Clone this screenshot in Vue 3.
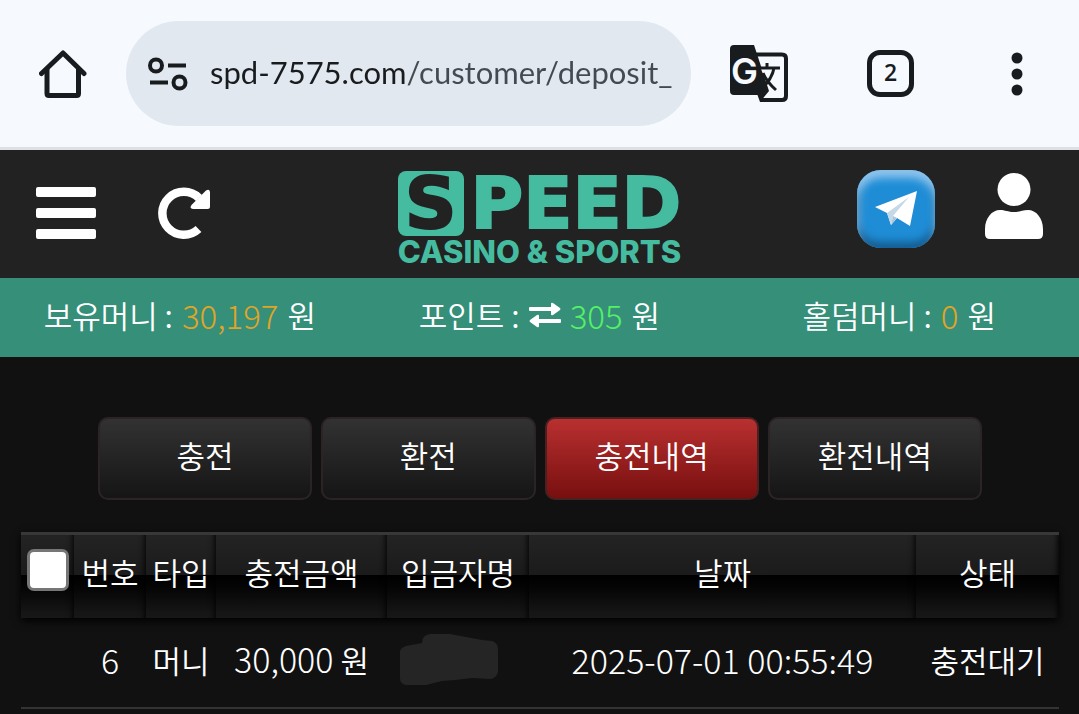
<script setup>
import { ref } from 'vue'

const url = ref('spd-7575.com/customer/deposit_')
const allChecked = ref(false)

const balances = [
  { label: '보유머니', value: '30,197', tone: 'gold' },
  { label: '포인트', value: '305', tone: 'lime', swap: true },
  { label: '홀덤머니', value: '0', tone: 'gold' }
]

const tabs = ['충전', '환전', '충전내역', '환전내역']
const active = ref('충전내역')

const headers = ['번호', '타입', '충전금액', '입금자명', '날짜', '상태']
const rows = [
  { no: '6', type: '머니', amount: '30,000', date: '2025-07-01 00:55:49', status: '충전대기' }
]
</script>

<template>
  <div class="screen">
    <div class="browser">
      <button class="icon-btn" aria-label="Home">
        <svg width="48" height="50" viewBox="0 0 48 50" fill="none" stroke="#181c1f" stroke-width="5">
          <path d="M8 20V44.500Q8 46.500 10 46.500H37.500Q39.500 46.500 39.500 44.500V20" />
          <path d="M2.500 24.500L24 4L45 24.500" stroke-linejoin="round" stroke-linecap="round" />
        </svg>
      </button>
      <div class="address">
        <svg width="40" height="34" viewBox="0 0 40 34" fill="none" stroke="#181c1f" stroke-width="4">
          <circle cx="8" cy="8.500" r="6" />
          <path d="M20 8.500H38M2 25.500H20" />
          <circle cx="31.500" cy="25.500" r="6" />
        </svg>
        <input v-model="url" class="url" type="text" aria-label="Address" />
      </div>
      <button class="icon-btn translate" aria-label="Translate">
        <svg width="58" height="60" viewBox="0 0 58 60">
          <path d="M24 10.500H52Q56 10.500 56 14.500V52Q56 56 52 56H30" fill="none" stroke="#181c1f" stroke-width="4" />
          <path d="M4 1H24L27 10L39 47L30 58L27.500 51H4Q0 51 0 47V5Q0 1 4 1Z" fill="#181c1f" />
          <text x="1" y="40" class="g">G</text>
          <path d="M31 25H40L35 35Z" fill="#f6faff" />
          <g fill="none" stroke="#181c1f" stroke-width="3">
            <path d="M29 24H50M37 19V24M44 24Q42 36 29 47M33 29Q36 37 46 46" />
          </g>
        </svg>
      </button>
      <button class="tab-count" aria-label="Tabs">2</button>
      <button class="icon-btn dots" aria-label="More">
        <svg width="12" height="44" viewBox="0 0 12 44" fill="#181c1f">
          <circle cx="6" cy="6" r="5.500" />
          <circle cx="6" cy="22" r="5.500" />
          <circle cx="6" cy="38" r="5.500" />
        </svg>
      </button>
    </div>

    <header class="top">
      <div class="side">
        <button class="icon-btn" aria-label="Menu">
          <svg width="60" height="54" viewBox="0 0 60 54" fill="#fff">
            <rect width="60" height="10" rx="2" y="0" />
            <rect width="60" height="10" rx="2" y="21" />
            <rect width="60" height="10" rx="2" y="42" />
          </svg>
        </button>
        <button class="icon-btn" aria-label="Reload">
          <svg width="52" height="54" viewBox="0 0 52 54">
            <path d="M40.500 42A21.500 21.500 0 1 1 41 11" fill="none" stroke="#fff" stroke-width="8.500" />
            <path d="M48 3.500Q51.500 1.500 52 5V19.500Q52 22 49.500 22H35Q31 21.500 33.500 18Z" fill="#fff" />
          </svg>
        </button>
      </div>
      <a class="logo" href="#">
        <span class="brand"><span class="tile">S</span><span>PEED</span></span>
        <span class="tagline">CASINO &amp; SPORTS</span>
      </a>
      <div class="side right">
        <a class="telegram" href="#" aria-label="Telegram">
          <svg width="44" height="38" viewBox="0 0 44 38">
            <path d="M1 17L43 1L36 36L23 28L17 35L13 23Z" fill="#fff" />
            <path d="M13 23L35 7L19 26L17 35Z" fill="#c5d8e8" />
            <path d="M17 35L19 26L23 28Z" fill="#a9c6de" />
          </svg>
        </a>
        <button class="icon-btn account" aria-label="Account">
          <svg width="58" height="66" viewBox="0 0 58 66" fill="#fff">
            <circle cx="29" cy="16.500" r="16.500" />
            <path d="M0 56C0 45 7 37 15 37C20 37 23 39 29 39C35 39 38 37 43 37C51 37 58 45 58 56V61Q58 66 53 66H5Q0 66 0 61Z" />
          </svg>
        </button>
      </div>
    </header>

    <div class="balances">
      <div v-for="b in balances" :key="b.label" class="balance">
        <span>{{ b.label }} :</span>
        <button v-if="b.swap" class="icon-btn" aria-label="전환">
          <svg width="32" height="26" viewBox="0 0 32 26" fill="#fff">
            <path d="M1 5H22V2Q22 0 24 1L31 6Q32 7 31 8L24 13Q22 14 22 12V9H1Q0 9 0 8V6Q0 5 1 5Z" />
            <path d="M31 17H10V14Q10 12 8 13L1 18Q0 19 1 20L8 25Q10 26 10 24V21H31Q32 21 32 20V18Q32 17 31 17Z" />
          </svg>
        </button>
        <span class="num" :class="b.tone">{{ b.value }}</span>
        <span>원</span>
      </div>
    </div>

    <main>
      <nav class="tabs">
        <button v-for="t in tabs" :key="t" :class="{ active: t === active }" @click="active = t">{{ t }}</button>
      </nav>

      <table>
        <colgroup>
          <col class="c-check" /><col class="c-no" /><col class="c-type" /><col class="c-amount" />
          <col class="c-name" /><col /><col class="c-status" />
        </colgroup>
        <thead>
          <tr>
            <th><input v-model="allChecked" type="checkbox" aria-label="전체 선택" /></th>
            <th v-for="h in headers" :key="h">{{ h }}</th>
          </tr>
        </thead>
        <tbody>
          <tr v-for="r in rows" :key="r.no">
            <td></td>
            <td class="num">{{ r.no }}</td>
            <td>{{ r.type }}</td>
            <td><span class="num">{{ r.amount }}</span> 원</td>
            <td class="name">
              <svg width="98" height="52" viewBox="0 0 98 52">
                <path d="M6 12L22 9Q22 1 30 0H50L82 6L92 7Q98 9 98 15V38Q96 45 90 45L72 44L55 46L42 47L26 51H6Q0 50 0 44V18Q0 14 6 12Z" fill="#252525" />
              </svg>
            </td>
            <td class="num">{{ r.date }}</td>
            <td>{{ r.status }}</td>
          </tr>
        </tbody>
      </table>
    </main>
  </div>
</template>

<style>
body {
  background: #111;
}
</style>

<style scoped>
.screen {
  min-height: 100vh;
  overflow: hidden;
  background: #111;
  color: #fff;
  font-family: "Noto Sans CJK KR", sans-serif;
  font-size: 31px;
  font-weight: 350;
  line-height: 40px;
}
button,
input {
  font: inherit;
  color: inherit;
}
.icon-btn {
  display: flex;
  padding: 0;
  border: 0;
  background: none;
  cursor: pointer;
}
svg {
  display: block;
  flex: none;
}
.browser {
  box-sizing: border-box;
  height: 150px;
  display: flex;
  align-items: center;
  padding: 0 56px 0 39px;
  background: #f6faff;
  border-bottom: 3px solid #dde1e5;
}
.address {
  box-sizing: border-box;
  flex: 1;
  min-width: 0;
  height: 105px;
  margin: 0 39px;
  padding: 0 18px 0 22px;
  display: flex;
  align-items: center;
  gap: 22px;
  border-radius: 53px;
  background: #e2e8f0;
}
.url {
  flex: 1;
  min-width: 0;
  padding: 0 0 4px;
  border: 0;
  outline: 0;
  font-family: Lato, sans-serif;
  font-size: 31px;
  font-weight: 400;
  color: transparent;
  background: linear-gradient(to right, #181c1f 197px, #434a50 197px);
  background-clip: text;
}
.g {
  font-family: Inter, sans-serif;
  font-size: 36px;
  font-weight: 600;
  fill: #f6faff;
}
.tab-count {
  box-sizing: border-box;
  width: 47px;
  height: 47px;
  margin: 0 97px 0 79px;
  padding: 0 0 4px;
  border: 5px solid #181c1f;
  border-radius: 13px;
  background: none;
  color: #181c1f;
  font-family: "Open Sans", sans-serif;
  font-size: 23px;
  font-weight: 600;
  line-height: 32px;
}
.top {
  box-sizing: border-box;
  height: 128px;
  display: grid;
  grid-template-columns: 1fr auto 1fr;
  align-items: center;
  padding: 0 36px;
  background: #222;
}
.side {
  display: flex;
  align-items: center;
  gap: 62px;
}
.right {
  justify-content: flex-end;
  gap: 50px;
  padding-bottom: 10px;
}
.account {
  margin-bottom: 6px;
}
.logo {
  display: flex;
  flex-direction: column;
  margin-top: 11px;
  color: #45bba0;
  text-decoration: none;
}
.brand {
  display: flex;
  align-items: center;
  justify-content: space-between;
  font-family: "DejaVu Sans", sans-serif;
  font-size: 72px;
  font-weight: 700;
  line-height: 65px;
  -webkit-text-stroke: 2px currentColor;
}
.tile {
  width: 66px;
  height: 65px;
  border-radius: 8px;
  background: #45bba0;
  color: #222;
  text-align: center;
}
.tagline {
  font-family: Inter, sans-serif;
  font-size: 31px;
  font-weight: 800;
  line-height: 32px;
  text-align: center;
}
.telegram {
  width: 78px;
  height: 78px;
  display: flex;
  align-items: center;
  justify-content: center;
  border-radius: 24px;
  background: #1f8dd6;
  box-shadow: inset 0 8px 8px #8fc4ec, inset 0 -6px 8px #12598c, inset 4px 0 8px #479fdc;
}
.balances {
  height: 79px;
  display: grid;
  grid-template-columns: repeat(3, 1fr);
  background: #358f79;
}
.balance {
  display: flex;
  align-items: center;
  justify-content: center;
  gap: 9px;
  padding-bottom: 6px;
}
.num {
  font-size: 34px;
  font-weight: 300;
}
.balance .num {
  font-size: 33px;
}
.gold {
  color: #e0a526;
}
.lime {
  color: #55f066;
}
main {
  padding: 60px 20px 0 21px;
}
.tabs {
  display: flex;
  gap: 9px;
  padding: 0 77px;
}
.tabs button {
  flex: 1;
  height: 83px;
  padding: 0 0 8px;
  border: 2px solid #2c2424;
  border-radius: 10px;
  background: linear-gradient(#323232, #151515);
  cursor: pointer;
}
.tabs .active {
  border-color: #4a2020;
  background: linear-gradient(#b93030, #780f0f);
}
table {
  width: 100%;
  margin-top: 32px;
  table-layout: fixed;
  border-collapse: collapse;
  text-align: center;
}
.c-check { width: 53px; }
.c-no { width: 72px; }
.c-type { width: 70px; }
.c-amount { width: 171px; }
.c-name { width: 142px; }
.c-status { width: 143px; }
thead {
  box-shadow: 0 3px 8px #000;
}
th {
  box-sizing: border-box;
  height: 86px;
  padding: 0 0 6px;
  font-weight: inherit;
  white-space: nowrap;
  background: linear-gradient(#242424, #1b1b1b 50%, #000 50%, #050505 65%, #191919);
  box-shadow: inset 0 3px #383838, inset -5px 0 6px -4px #000;
}
th input {
  appearance: none;
  display: block;
  width: 42px;
  height: 42px;
  margin: 0 0 4px 6px;
  border: 3px solid #767676;
  border-radius: 7px;
  background: #fff;
}
th input:checked {
  background: #1f8dd6;
}
td {
  box-sizing: border-box;
  height: 90px;
  padding: 0 0 6px;
  border-bottom: 2px solid #333;
  white-space: nowrap;
}
.name svg {
  margin-left: 13px;
}
</style>
